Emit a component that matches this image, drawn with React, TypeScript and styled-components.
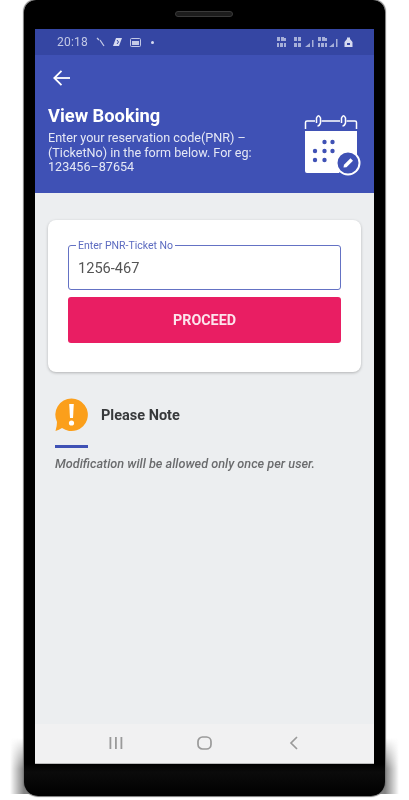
import React from "react";
import styled, { createGlobalStyle } from "styled-components";

const Global = createGlobalStyle`
  html, body { margin: 0; padding: 0; background: #fff; }
  body { font-family: Roboto, "Liberation Sans", sans-serif; overflow: hidden; }
  * { box-sizing: border-box; }
`;

const Page = styled.div`
  width: 409px;
  height: 800px;
  padding-left: 24px;
  background: #fff;
  overflow: hidden;
  position: relative;
  isolation: isolate;
`;

const Phone = styled.div`
  position: relative;
  width: 361px;
  height: 796px;
  background: linear-gradient(#000 96%, #0b0b0b 97%, #000 100%);
  border-radius: 12px 12px 14px 14px;
  padding: 29px 11px 32px;
  box-shadow: 0 0 1px 1px #777;
  &::before {
    content: "";
    position: absolute;
    left: -14px;
    right: -14px;
    top: 738px;
    bottom: 2px;
    z-index: -1;
    background: linear-gradient(90deg, rgba(90,90,90,0), rgba(80,80,80,0.7) 14px, rgba(80,80,80,0.7) calc(100% - 14px), rgba(90,90,90,0));
    mask-image: linear-gradient(rgba(0,0,0,0), #000 55%);
  }
`;

const Speaker = styled.div`
  position: absolute;
  top: 11px;
  left: 151px;
  width: 58px;
  height: 6px;
  border-radius: 3px;
  background: #1c1c1c;
  border: 1px solid #3a3a3a;
  filter: blur(0.5px);
`;

const Screen = styled.div`
  width: 339px;
  height: 735px;
  display: flex;
  flex-direction: column;
  background: #eceef0;
  filter: blur(0.5px);
`;

const StatusBar = styled.div`
  height: 26px;
  flex: none;
  background: #3546a3;
  display: flex;
  align-items: center;
  justify-content: space-between;
  padding: 0 19px 0 22px;
  color: #c3c9e6;
`;

const StatusGroup = styled.div`
  display: flex;
  align-items: center;
  gap: 7px;
`;

const Clock = styled.span`
  font-size: 12px;
  letter-spacing: 0.2px;
  margin-right: 1px;
`;

const Header = styled.header`
  height: 138px;
  flex: none;
  background: #3f51b5;
  padding: 13px 13px 0 13px;
  color: #fff;
`;

const BackButton = styled.div`
  height: 20px;
  display: flex;
  align-items: center;
  margin-bottom: 17px;
  padding-left: 4px;
`;

const HeaderRow = styled.div`
  display: flex;
  justify-content: space-between;
  align-items: flex-start;
`;

const HeaderText = styled.div`
  width: 240px;
`;

const Title = styled.h1`
  margin: 0 0 4px;
  font-size: 18.3px;
  line-height: 22px;
  font-weight: 700;
`;

const Subtitle = styled.p`
  margin: 0;
  font-size: 12.6px;
  line-height: 14.5px;
  color: #e4e7f5;
`;

const Content = styled.main`
  flex: 1;
  padding: 27px 13px 0 13px;
`;

const Card = styled.section`
  height: 152px;
  background: #fff;
  border-radius: 8px;
  box-shadow: 0 1px 3px rgba(0, 0, 0, 0.25);
  padding: 20px 20px 0;
`;

const Field = styled.fieldset`
  margin: 0;
  height: 50px;
  padding: 0 8px;
  border: 1.5px solid #6472c4;
  border-radius: 3px;
`;

const FieldLabel = styled.legend`
  font-size: 10.5px;
  line-height: 11px;
  color: #5c6bc0;
  padding: 0 2px;
  margin-left: -1px;
`;

const FieldValue = styled.div`
  font-size: 14.6px;
  line-height: 30px;
  color: #555;
  padding: 2px 0 0 1px;
`;

const Proceed = styled.button`
  display: block;
  width: 100%;
  height: 46px;
  margin-top: 7px;
  border: 0;
  border-radius: 3px;
  background: #e91e63;
  color: #fde4ec;
  font-family: Roboto, "Liberation Sans", sans-serif;
  font-size: 14.3px;
  font-weight: 700;
`;

const Note = styled.section`
  padding: 26px 0 0 7px;
`;

const NoteHead = styled.div`
  display: flex;
  align-items: center;
  gap: 13px;
`;

const NoteTitle = styled.h2`
  margin: 0;
  font-size: 14.5px;
  font-weight: 700;
  color: #37393b;
`;

const Rule = styled.div`
  width: 33px;
  height: 3px;
  margin-top: 13px;
  background: #3f51b5;
`;

const NoteText = styled.p`
  margin: 9px 0 0;
  font-size: 12.7px;
  line-height: 14px;
  font-style: italic;
  font-weight: 500;
  white-space: nowrap;
  color: #6a6b6d;
`;

const NavBar = styled.nav`
  height: 40px;
  flex: none;
  background: #f1f1f2;
  border-bottom: 1px solid #bbb;
  display: grid;
  grid-template-columns: 1fr 1fr 1fr;
  padding: 0 36px 2px;
  align-items: center;
  justify-items: center;
`;

export default function App() {
  return (
    <Page>
      <Global />
      <Phone>
        <Speaker />
        <Screen>
          <StatusBar>
            <StatusGroup>
              <Clock>20:18</Clock>
              <svg width="9" height="10" viewBox="0 0 9 10" fill="none" stroke="#c3c9e6" strokeWidth="1.3"><path d="M1 1 L3 3 M4 3 L8 9" /></svg>
              <svg width="11" height="10" viewBox="0 0 11 10" fill="#d6daf0"><path d="M4 1 H10 L7 9 H1 Z" /><path d="M5 3 L6.5 5 L5 7" stroke="#3546a3" strokeWidth="1" fill="none" /></svg>
              <svg width="11" height="9" viewBox="0 0 11 9" fill="none"><rect x="0.5" y="0.5" width="10" height="8" rx="1" stroke="#c3c9e6" /><rect x="2" y="3" width="7" height="4" fill="#c3c9e6" /></svg>
              <svg width="5" height="5" viewBox="0 0 5 5" style={{ marginLeft: 2 }}><circle cx="2.5" cy="2.5" r="1.5" fill="#d6daf0" /></svg>
            </StatusGroup>
            <StatusGroup>
              <svg width="78" height="12" viewBox="0 0 78 12" fill="#bcc3e3">
                <g opacity="0.85">
                  <rect x="0" y="1" width="3" height="4" /><rect x="4" y="1" width="3" height="4" /><rect x="7" y="2" width="2" height="3" />
                  <rect x="0" y="7" width="2" height="4" /><rect x="3" y="7" width="3" height="4" /><rect x="7" y="7" width="2" height="4" />
                  <rect x="17" y="1" width="3" height="4" /><rect x="21" y="1" width="3" height="4" /><rect x="17" y="7" width="3" height="4" /><rect x="21" y="7" width="3" height="4" />
                  <path d="M28 11 L33 11 L33 7 Z" /><rect x="35" y="4" width="1.5" height="7" />
                  <rect x="41" y="1" width="3" height="4" /><rect x="45" y="1" width="3" height="4" /><rect x="48" y="2" width="2" height="3" />
                  <rect x="41" y="7" width="2" height="4" /><rect x="44" y="7" width="3" height="4" /><rect x="48" y="7" width="2" height="4" />
                  <path d="M52 11 L57 11 L57 7 Z" /><rect x="59" y="3" width="1.5" height="8" />
                </g>
                <path d="M70 1.5 H73 V3 L75.5 6 V11 H67.5 V6 L70 3 Z" fill="#d6daf0" />
                <rect x="70" y="7" width="3" height="2" fill="#3546a3" />
              </svg>
            </StatusGroup>
          </StatusBar>
          <Header>
            <BackButton>
              <svg width="20" height="18" viewBox="0 0 20 18" fill="none" stroke="#fff" strokeWidth="1.8">
                <path d="M18 9 H2.5" />
                <path d="M9.5 1.8 L2.3 9 L9.5 16.2" />
              </svg>
            </BackButton>
            <HeaderRow>
              <HeaderText>
                <Title>View Booking</Title>
                <Subtitle>
                  Enter your reservation code(PNR) – (TicketNo) in the form below. For eg: 123456–87654
                </Subtitle>
              </HeaderText>
              <svg width="58" height="62" viewBox="0 0 58 62" style={{ marginTop: 9 }}>
                <path d="M2.5 15 V8.5 Q2.5 7 4 7 H12 M18.5 7 H37 M43.5 7 H52 Q53.5 7 53.5 8.5 V15" fill="none" stroke="#fff" strokeWidth="1.5" />
                <path d="M13.5 9 V4 Q15.5 -0.5 17.5 4 V9 Q16.5 12 14.5 12" fill="none" stroke="#fff" strokeWidth="1.5" />
                <path d="M38.5 9 V4 Q40.5 -0.5 42.5 4 V9 Q41.5 12 39.5 12" fill="none" stroke="#fff" strokeWidth="1.5" />
                <path d="M2 17 H54 V46 H44 L36 59 H4 Q2 59 2 57 Z" fill="#fff" />
                <g fill="#3f51b5">
                  <circle cx="21.5" cy="28" r="2.2" /><circle cx="29.5" cy="28" r="2.2" />
                  <circle cx="12" cy="37" r="2.2" /><circle cx="21.5" cy="37" r="2.2" /><circle cx="29.5" cy="37" r="2.2" />
                  <circle cx="12" cy="46" r="2.2" /><circle cx="21.5" cy="46" r="2.2" />
                </g>
                <circle cx="45" cy="49" r="11.5" fill="#3f51b5" stroke="#fff" strokeWidth="2" />
                <path d="M40.5 53.5 L41 50.8 L47.5 44.3 L50 46.8 L43.5 53.2 Z" fill="#fff" />
              </svg>
            </HeaderRow>
          </Header>
          <Content>
            <Card>
              <Field>
                <FieldLabel>Enter PNR-Ticket No</FieldLabel>
                <FieldValue>1256-467</FieldValue>
              </Field>
              <Proceed>PROCEED</Proceed>
            </Card>
            <Note>
              <NoteHead>
                <svg width="33" height="34" viewBox="0 0 33 34">
                  <path d="M16.5 0.5 A16.3 16.3 0 1 1 7 30 Q4 32 0.5 33 Q2 28 2 24 A16.3 16.3 0 0 1 16.5 0.5 Z" fill="#fb9f1b" />
                  <path d="M14.2 6 H18.8 L18 20 H15 Z" fill="#fff" />
                  <circle cx="16.5" cy="25" r="2.6" fill="#fff" />
                </svg>
                <NoteTitle>Please Note</NoteTitle>
              </NoteHead>
              <Rule />
              <NoteText>Modification will be allowed only once per user.</NoteText>
            </Note>
          </Content>
          <NavBar>
            <svg width="14" height="14" viewBox="0 0 14 14" fill="#9a9a9a"><rect x="0.5" y="1" width="1.8" height="12" /><rect x="6" y="1" width="1.8" height="12" /><rect x="11.5" y="1" width="1.8" height="12" /></svg>
            <svg width="15" height="14" viewBox="0 0 15 14" fill="none" stroke="#9a9a9a" strokeWidth="1.7"><rect x="1" y="1" width="13" height="12" rx="4.5" /></svg>
            <svg width="10" height="14" viewBox="0 0 10 14" fill="none" stroke="#9a9a9a" strokeWidth="1.7"><path d="M8 1 L2 7 L8 13" /></svg>
          </NavBar>
        </Screen>
      </Phone>
    </Page>
  );
}
